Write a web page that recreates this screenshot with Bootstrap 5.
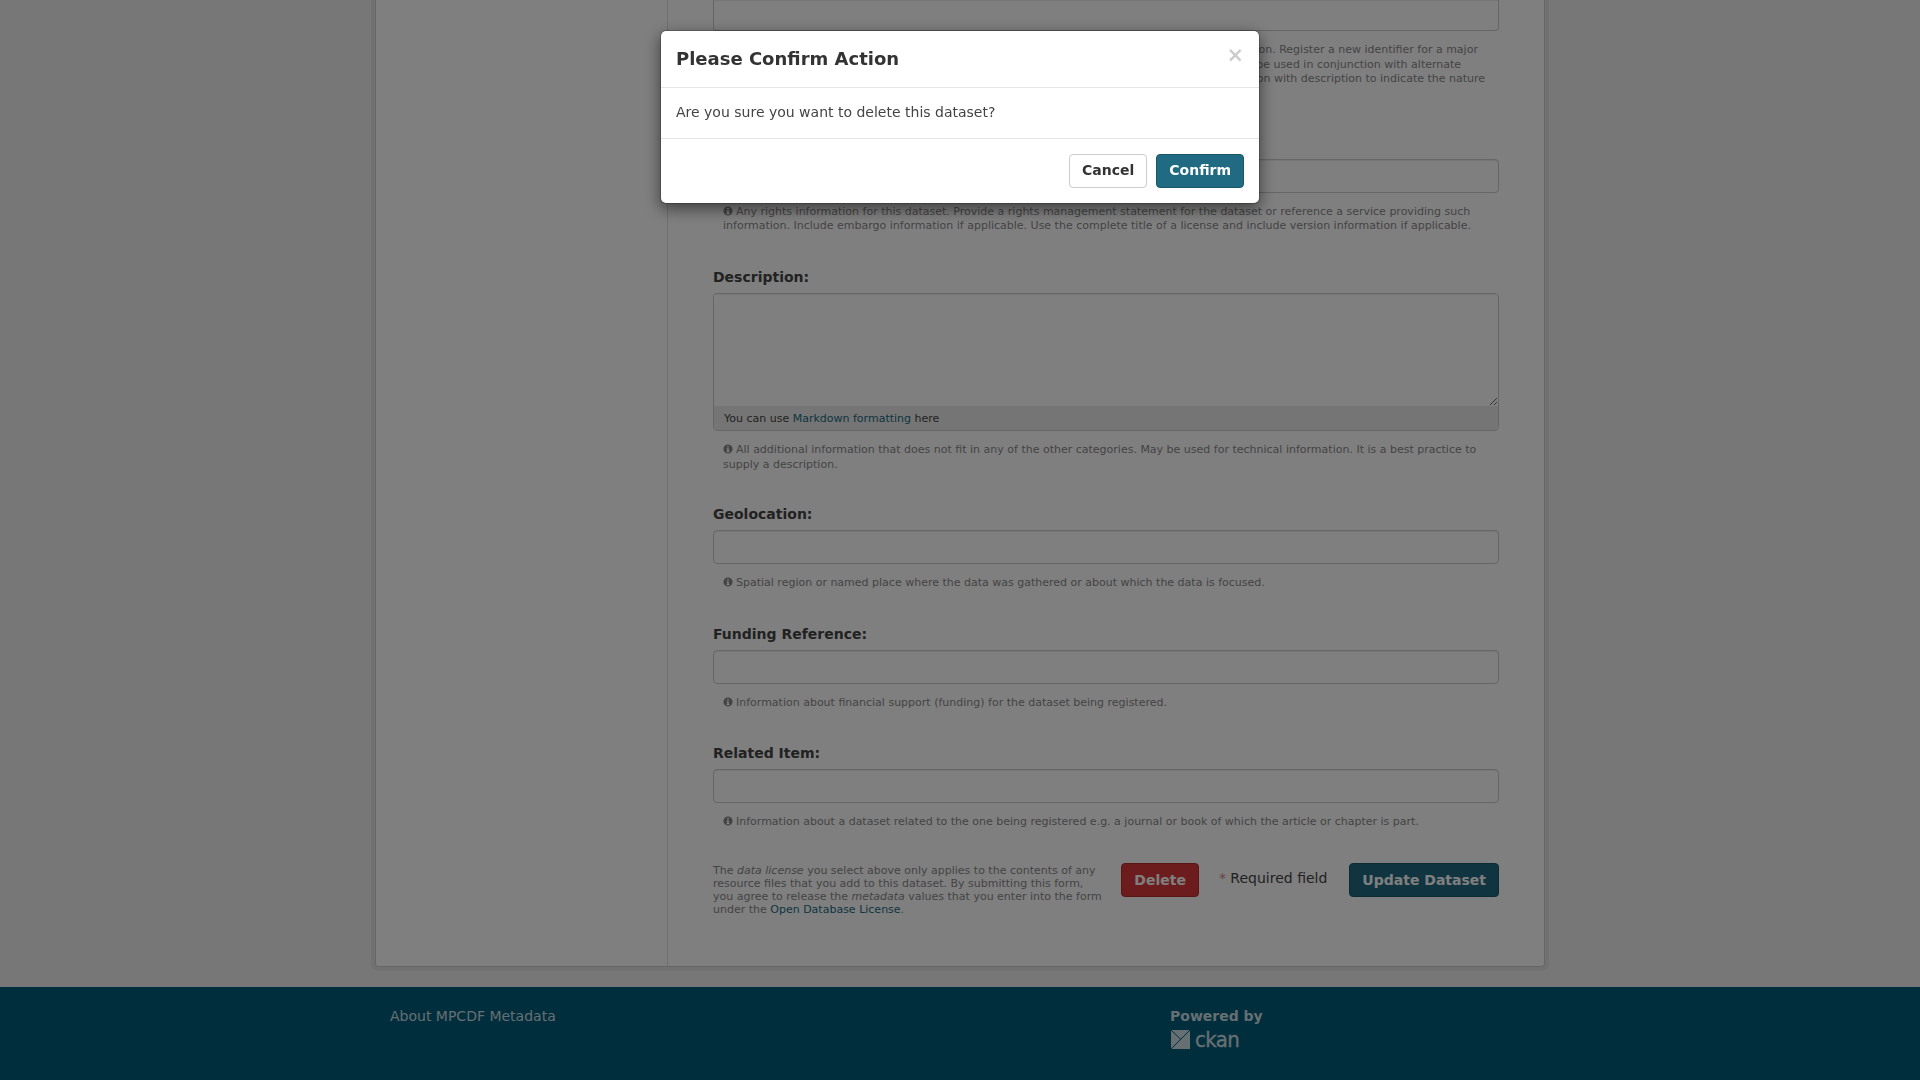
<!DOCTYPE html>
<html lang="en">
<head>
  <meta charset="UTF-8" />
  <title>Edit Dataset - MPCDF Metadata</title>
  <meta name="viewport" content="width=device-width, initial-scale=1" />
  <link rel="stylesheet" href="https://cdn.jsdelivr.net/npm/bootstrap@5.3.0/dist/css/bootstrap.min.css" />
  <style>
    html, body { height: 100%; overflow: hidden; }
    body { background: #efefef; color: #444; font-family: "DejaVu Sans", sans-serif; font-size: 14px; line-height: 20px; }
    a { color: #206b82; text-decoration: none; }

    .page-box { width: 1170px; margin: 0 auto; background: #fff; border: 1px solid #ccc; border-top: 0; border-radius: 0 0 3px 3px; box-shadow: 0 0 0 4px rgba(0, 0, 0, .05); }
    .side-col { flex: 0 0 292px; border-right: 1px solid #ddd; }
    .main-col { flex: 1 1 0; min-width: 0; padding: 0 45px; height: 966px; }

    .form-control { height: 34px; padding: 6px 12px; font-size: 14px; border: 1px solid #ccc; border-radius: 4px; box-shadow: inset 0 1px 1px rgba(0, 0, 0, .075); }
    .form-control.field-top { height: 31px; border-top: 0; border-top-left-radius: 0; border-top-right-radius: 0; }
    .field-box { margin-bottom: 32.6px; }
    .field-first { margin-bottom: 31.6px; }
    .field-rights { margin-bottom: 33.6px; }
    .field-desc { margin-bottom: 32px; }
    .field-geo { margin-bottom: 33.2px; }
    .field-label { display: block; font-weight: 700; color: #444; margin-bottom: 6px; }
    .help-text { margin: 12px 0 0; padding-left: 10px; font-size: 11px; line-height: 14.5px; color: #888; }
    .help-text svg { width: 10px; height: 10px; margin-right: 3px; vertical-align: -1px; }

    .editor-box { border: 1px solid #ccc; border-radius: 4px; overflow: hidden; }
    .editor-box textarea { display: block; width: 100%; height: 112px; border: 0; outline: 0; box-shadow: inset 0 1px 1px rgba(0, 0, 0, .075); }
    .editor-note { height: 24px; padding: 0 10px; background: #ebebeb; font-size: 11px; line-height: 25px; color: #444; }

    .form-actions { margin-top: 34px; }
    .form-actions .action-btn { padding: 6px 12px; }
    .terms-text { margin: 0; font-size: 11px; line-height: 13px; color: #888; padding-top: 1px; }
    .action-btn { height: 34px; padding: 5px 12px 7px; font-size: 14px; font-weight: 700; line-height: 20px; border-radius: 4px; color: #fff; white-space: nowrap; }
    .btn-del { background: #d9383a; border: 1px solid #b52b2f; }
    .btn-main { background: #206b82; border: 1px solid #1a5669; }
    .btn-plain { background: #fff; border: 1px solid #ccc; color: #333; }
    .req-note { margin: 5px 22px 0 20px; white-space: nowrap; color: #444; }
    .req-note span { color: #c6898b; }

    .site-foot { margin-top: 20px; height: 200px; background: #005d7a; color: #ccdee3; }
    .foot-inner { width: 1170px; margin: 0 auto; padding: 19px 15px 0; }
    .foot-left { width: 780px; }
    .foot-left a { color: #ccdee3; }
    .powered { font-weight: 700; }
    .logo-row { margin-top: 3px; height: 20px; }
    .logo-row svg { width: 19px; height: 19px; display: block; margin-left: 1px; }
    .logo-word { font-family: "DejaVu Sans Condensed", "DejaVu Sans", sans-serif; font-size: 22px; line-height: 19px; margin-left: 5px; letter-spacing: -.6px; -webkit-text-stroke: .3px #ccdee3; }

    .modal-dialog { max-width: 600px; margin: 30px auto; }
    .modal-content { border: 1px solid rgba(0, 0, 0, .2); border-radius: 6px; box-shadow: 0 5px 15px rgba(0, 0, 0, .5); color: #444; }
    .modal-header { padding: 15px; border-bottom: 1px solid #e5e5e5; }
    .modal-title { font-size: 18px; font-weight: 700; line-height: 26px; color: #333; }
    .modal-body { padding: 14px 15px 16px; }
    .modal-footer { padding: 15px; border-top: 1px solid #e5e5e5; gap: 9px; }
    .modal-footer > * { margin: 0; }
    .close-x { position: absolute; top: 12px; right: 15px; padding: 0; border: 0; background: none; font-size: 21px; font-weight: 700; line-height: 25px; color: #000; opacity: .2; }
  </style>
</head>
<body>
  <div class="page-box d-flex">
    <div class="side-col"></div>
    <div class="main-col">
      <div class="field-box field-first">
        <input type="text" class="form-control field-top" />
        <p class="help-text">
          <svg viewBox="0 0 24 24"><path fill="currentColor" fill-rule="evenodd" d="M12 1a11 11 0 1 0 0 22a11 11 0 0 0 0-22zM10 4.5h4v3.5h-4zM9 10h5v7h1.5v2.5h-7V17H10v-4.5H9z"/></svg>The version numbers of all the resources. Suggested practice: track major_version.minor_version. Register a new identifier for a major<br />
          version change. Individual stewards need to determine which are major vs. minor versions. May be used in conjunction with alternate<br />
          identifiers to indicate the various types of information and file updates. May be used in conjunction with description to indicate the nature<br />
          and file/software version.
        </p>
      </div>

      <div class="field-box field-rights">
        <label class="field-label">Rights:</label>
        <input type="text" class="form-control" />
        <p class="help-text">
          <svg viewBox="0 0 24 24"><path fill="currentColor" fill-rule="evenodd" d="M12 1a11 11 0 1 0 0 22a11 11 0 0 0 0-22zM10 4.5h4v3.5h-4zM9 10h5v7h1.5v2.5h-7V17H10v-4.5H9z"/></svg>Any rights information for this dataset. Provide a rights management statement for the dataset or reference a service providing such information. Include embargo information if applicable. Use the complete title of a license and include version information if applicable.
        </p>
      </div>

      <div class="field-box field-desc">
        <label class="field-label">Description:</label>
        <div class="editor-box">
          <textarea></textarea>
          <div class="editor-note">You can use <a href="#">Markdown formatting</a> here</div>
        </div>
        <p class="help-text">
          <svg viewBox="0 0 24 24"><path fill="currentColor" fill-rule="evenodd" d="M12 1a11 11 0 1 0 0 22a11 11 0 0 0 0-22zM10 4.5h4v3.5h-4zM9 10h5v7h1.5v2.5h-7V17H10v-4.5H9z"/></svg>All additional information that does not fit in any of the other categories. May be used for technical information. It is a best practice to supply a description.
        </p>
      </div>

      <div class="field-box field-geo">
        <label class="field-label">Geolocation:</label>
        <input type="text" class="form-control" />
        <p class="help-text">
          <svg viewBox="0 0 24 24"><path fill="currentColor" fill-rule="evenodd" d="M12 1a11 11 0 1 0 0 22a11 11 0 0 0 0-22zM10 4.5h4v3.5h-4zM9 10h5v7h1.5v2.5h-7V17H10v-4.5H9z"/></svg>Spatial region or named place where the data was gathered or about which the data is focused.
        </p>
      </div>

      <div class="field-box">
        <label class="field-label">Funding Reference:</label>
        <input type="text" class="form-control" />
        <p class="help-text">
          <svg viewBox="0 0 24 24"><path fill="currentColor" fill-rule="evenodd" d="M12 1a11 11 0 1 0 0 22a11 11 0 0 0 0-22zM10 4.5h4v3.5h-4zM9 10h5v7h1.5v2.5h-7V17H10v-4.5H9z"/></svg>Information about financial support (funding) for the dataset being registered.
        </p>
      </div>

      <div class="field-box">
        <label class="field-label">Related Item:</label>
        <input type="text" class="form-control" />
        <p class="help-text">
          <svg viewBox="0 0 24 24"><path fill="currentColor" fill-rule="evenodd" d="M12 1a11 11 0 1 0 0 22a11 11 0 0 0 0-22zM10 4.5h4v3.5h-4zM9 10h5v7h1.5v2.5h-7V17H10v-4.5H9z"/></svg>Information about a dataset related to the one being registered e.g. a journal or book of which the article or chapter is part.
        </p>
      </div>

      <div class="form-actions d-flex align-items-start">
        <p class="terms-text flex-fill pe-3">The <em>data license</em> you select above only applies to the contents of any<br />resource files that you add to this dataset. By submitting this form,<br />you agree to release the <em>metadata</em> values that you enter into the form<br />under the <a href="#">Open Database License</a>.</p>
        <button type="button" class="action-btn btn-del">Delete</button>
        <p class="req-note"><span>*</span> Required field</p>
        <button type="button" class="action-btn btn-main">Update Dataset</button>
      </div>
    </div>
  </div>

  <footer class="site-foot">
    <div class="foot-inner d-flex">
      <div class="foot-left"><a href="#">About MPCDF Metadata</a></div>
      <div>
        <div class="powered">Powered by</div>
        <div class="logo-row d-flex align-items-center">
          <svg viewBox="0 0 19 19"><rect width="19" height="19" fill="#ccdee3"/><path d="M0 0L10 9.5M19 0L0 19" stroke="#005d7a" stroke-width="1" fill="none"/></svg>
          <span class="logo-word">ckan</span>
        </div>
      </div>
    </div>
  </footer>

  <div class="modal-backdrop show"></div>
  <div class="modal d-block" tabindex="-1">
    <div class="modal-dialog">
      <div class="modal-content">
        <div class="modal-header">
          <h3 class="modal-title m-0">Please Confirm Action</h3>
          <button type="button" class="close-x">×</button>
        </div>
        <div class="modal-body">Are you sure you want to delete this dataset?</div>
        <div class="modal-footer">
          <button type="button" class="action-btn btn-plain">Cancel</button>
          <button type="button" class="action-btn btn-main">Confirm</button>
        </div>
      </div>
    </div>
  </div>

  <script src="https://cdn.jsdelivr.net/npm/bootstrap@5.3.0/dist/js/bootstrap.bundle.min.js"></script>
</body>
</html>
